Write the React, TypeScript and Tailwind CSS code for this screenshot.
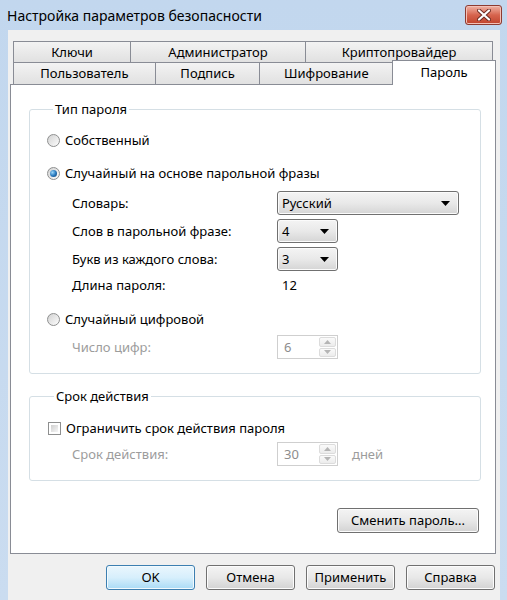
import type { ReactNode } from 'react';

// Win7-style "security settings" dialog, password tab

function Radio({ checked }: { checked?: boolean }) {
    return (
        <span className="w-[13px] h-[13px] shrink-0 rounded-full border border-[#8e8f8f] bg-linear-to-br from-[#d2d2d2] to-[#fdfdfd] flex items-center justify-center">
            {checked && (
                <span className="w-[7px] h-[7px] rounded-full bg-radial-[at_35%_35%] from-[#9bd6fa] via-[#2b7cc0] to-[#0b3a6e]" />
            )}
        </span>
    );
}

function Checkbox() {
    return (
        <span className="w-[13px] h-[13px] shrink-0 border border-[#8e8f8f] bg-white p-[2px] flex">
            <span className="flex-1 bg-linear-to-br from-[#cfcfcf] to-[#f6f6f6]" />
        </span>
    );
}

function Caret() {
    return (
        <svg width="9" height="5" viewBox="0 0 9 5">
            <path d="M0 0h9L4.5 5z" fill="#000" />
        </svg>
    );
}

function Combo({ value, width }: { value: string; width: string }) {
    return (
        <div
            className={`${width} h-[24px] rounded-[3px] border border-[#707070] bg-linear-to-b from-[#f4f4f4] via-[#e9e9e9] to-[#d5d5d5] shadow-[inset_0_0_0_1px_#fbfbfb] flex items-center justify-between pl-[4px] pr-[8px]`}
        >
            <span>{value}</span>
            <Caret />
        </div>
    );
}

function SpinArrow({ up }: { up?: boolean }) {
    return (
        <span className="flex-1 rounded-[2px] border border-[#dcdcdc] bg-linear-to-b from-[#fafafa] to-[#ececec] flex items-center justify-center">
            <svg width="7" height="4" viewBox="0 0 7 4">
                <path d={up ? 'M0 4h7L3.5 0z' : 'M0 0h7L3.5 4z'} fill="#b5b5b5" />
            </svg>
        </span>
    );
}

function Spin({ value }: { value: string }) {
    return (
        <div className="w-[61px] h-[24px] border border-[#cfcfcf] bg-white flex">
            <span className="flex-1 pl-[6px] flex items-center text-[#8d8d8d]">{value}</span>
            <div className="w-[19px] flex flex-col gap-px p-px">
                <SpinArrow up />
                <SpinArrow />
            </div>
        </div>
    );
}

function Button({ children, primary, width = 'w-[89px]' }: { children: ReactNode; primary?: boolean; width?: string }) {
    const skin = primary
        ? 'border-[#3c7fb1] from-[#eaf6fd] via-[#d7effc] to-[#a9dbf6] shadow-[inset_0_0_0_1px_#f2fafe]'
        : 'border-[#707070] from-[#f4f4f4] via-[#e8e8e8] to-[#d3d3d3] shadow-[inset_0_0_0_1px_#fcfcfc]';
    return (
        <div className={`${width} h-[25px] rounded-[3px] border bg-linear-to-b ${skin} flex items-center justify-center`}>
            {children}
        </div>
    );
}

function Tab({ label, width, active }: { label: string; width: string; active?: boolean }) {
    if (active) {
        return (
            <div className={`${width} h-[25px] -mb-px -ml-px relative z-10 border border-b-0 border-[#898c95] bg-white flex items-start justify-center pt-[2px]`}>
                {label}
            </div>
        );
    }
    return (
        <div className={`${width} h-full -ml-px border border-b-0 border-[#898c95] bg-linear-to-b from-[#f3f3f3] to-[#e1e1e1] flex items-center justify-center`}>
            {label}
        </div>
    );
}

const disabledText = 'text-[#9c9c9c]';

export default function App() {
    return (
        <div className="w-[507px] h-[600px] bg-linear-to-b from-[#c2d7ee] to-[#cadcf0] flex flex-col text-[13px] leading-[19px] text-black font-['Noto_Sans','DejaVu_Sans',sans-serif]">
            {/* title bar */}
            <div className="h-[30px] shrink-0 flex items-center justify-between pl-[7px] pr-[5px]">
                <span className="text-[14px]">Настройка параметров безопасности</span>
                <div className="w-[37px] h-[20px] rounded-[3px] border border-[#8d3b31] bg-linear-to-b from-[#eeb2a5] via-[#d6644e] to-[#c0432c] shadow-[inset_0_0_0_1px_#f3c2b8] flex items-center justify-center">
                    <svg width="14" height="12" viewBox="0 0 14 12">
                        <path d="M2 1.5l10 9M12 1.5l-10 9" stroke="#6b2a22" strokeWidth="4" strokeLinecap="round" />
                        <path d="M2 1.5l10 9M12 1.5l-10 9" stroke="#fff" strokeWidth="2.2" strokeLinecap="round" />
                    </svg>
                </div>
            </div>

            {/* dialog body */}
            <div className="flex-1 ml-[8px] mr-[7px] bg-[#f0f0f0] flex flex-col pt-[11px] pl-[2px] pr-[4px]">
                <div className="flex h-[21px] pl-[4px]">
                    <Tab label="Ключи" width="w-[118px]" />
                    <Tab label="Администратор" width="w-[176px]" />
                    <Tab label="Криптопровайдер" width="w-[188px]" />
                </div>
                <div className="flex items-end h-[22px] pl-[4px]">
                    <Tab label="Пользователь" width="w-[143px]" />
                    <Tab label="Подпись" width="w-[106px]" />
                    <Tab label="Шифрование" width="w-[134px]" />
                    <Tab label="Пароль" width="w-[104px]" active />
                </div>

                <div className="h-[470px] border border-[#898c95] bg-white flex flex-col pl-[18px] pr-[14px]">
                    <fieldset className="mt-[15px] rounded-[3px] border border-[#d5dfe5] pl-[17px] pb-[14px]">
                        <legend className="ml-[6px] px-[2px]">Тип пароля</legend>
                        <div className="h-[20px] mt-[11px] flex items-center gap-[5px]">
                            <Radio />
                            <span>Собственный</span>
                        </div>
                        <div className="h-[20px] mt-[13px] flex items-center gap-[5px]">
                            <Radio checked />
                            <span>Случайный на основе парольной фразы</span>
                        </div>
                        <div className="h-[24px] mt-[8px] pl-[25px] flex items-center">
                            <span className="w-[205px]">Словарь:</span>
                            <Combo value="Русский" width="w-[182px]" />
                        </div>
                        <div className="h-[24px] mt-[4px] pl-[25px] flex items-center">
                            <span className="w-[205px]">Слов в парольной фразе:</span>
                            <Combo value="4" width="w-[61px]" />
                        </div>
                        <div className="h-[24px] mt-[4px] pl-[25px] flex items-center">
                            <span className="w-[205px]">Букв из каждого слова:</span>
                            <Combo value="3" width="w-[61px]" />
                        </div>
                        <div className="h-[20px] mt-[4px] pl-[25px] flex items-center">
                            <span className="w-[205px]">Длина пароля:</span>
                            <span className="pl-[5px]">12</span>
                        </div>
                        <div className="h-[20px] mt-[14px] flex items-center gap-[5px]">
                            <Radio />
                            <span>Случайный цифровой</span>
                        </div>
                        <div className="h-[24px] mt-[6px] pl-[25px] flex items-center">
                            <span className={`w-[205px] ${disabledText}`}>Число цифр:</span>
                            <Spin value="6" />
                        </div>
                    </fieldset>

                    <fieldset className="mt-[13px] rounded-[3px] border border-[#d5dfe5] pl-[18px] pb-[14px]">
                        <legend className="ml-[6px] px-[2px]">Срок действия</legend>
                        <div className="h-[20px] mt-[12px] flex items-center gap-[5px]">
                            <Checkbox />
                            <span>Ограничить срок действия пароля</span>
                        </div>
                        <div className="h-[24px] mt-[4px] pl-[24px] flex items-center">
                            <span className={`w-[205px] ${disabledText}`}>Срок действия:</span>
                            <Spin value="30" />
                            <span className={`ml-[14px] ${disabledText}`}>дней</span>
                        </div>
                    </fieldset>

                    <div className="mt-[27px] mr-[2px] self-end">
                        <Button width="w-[142px]">Сменить пароль...</Button>
                    </div>
                </div>

                <div className="mt-[11px] flex justify-end gap-[11px] pr-px">
                    <Button primary>OK</Button>
                    <Button>Отмена</Button>
                    <Button>Применить</Button>
                    <Button>Справка</Button>
                </div>
            </div>
        </div>
    );
}
